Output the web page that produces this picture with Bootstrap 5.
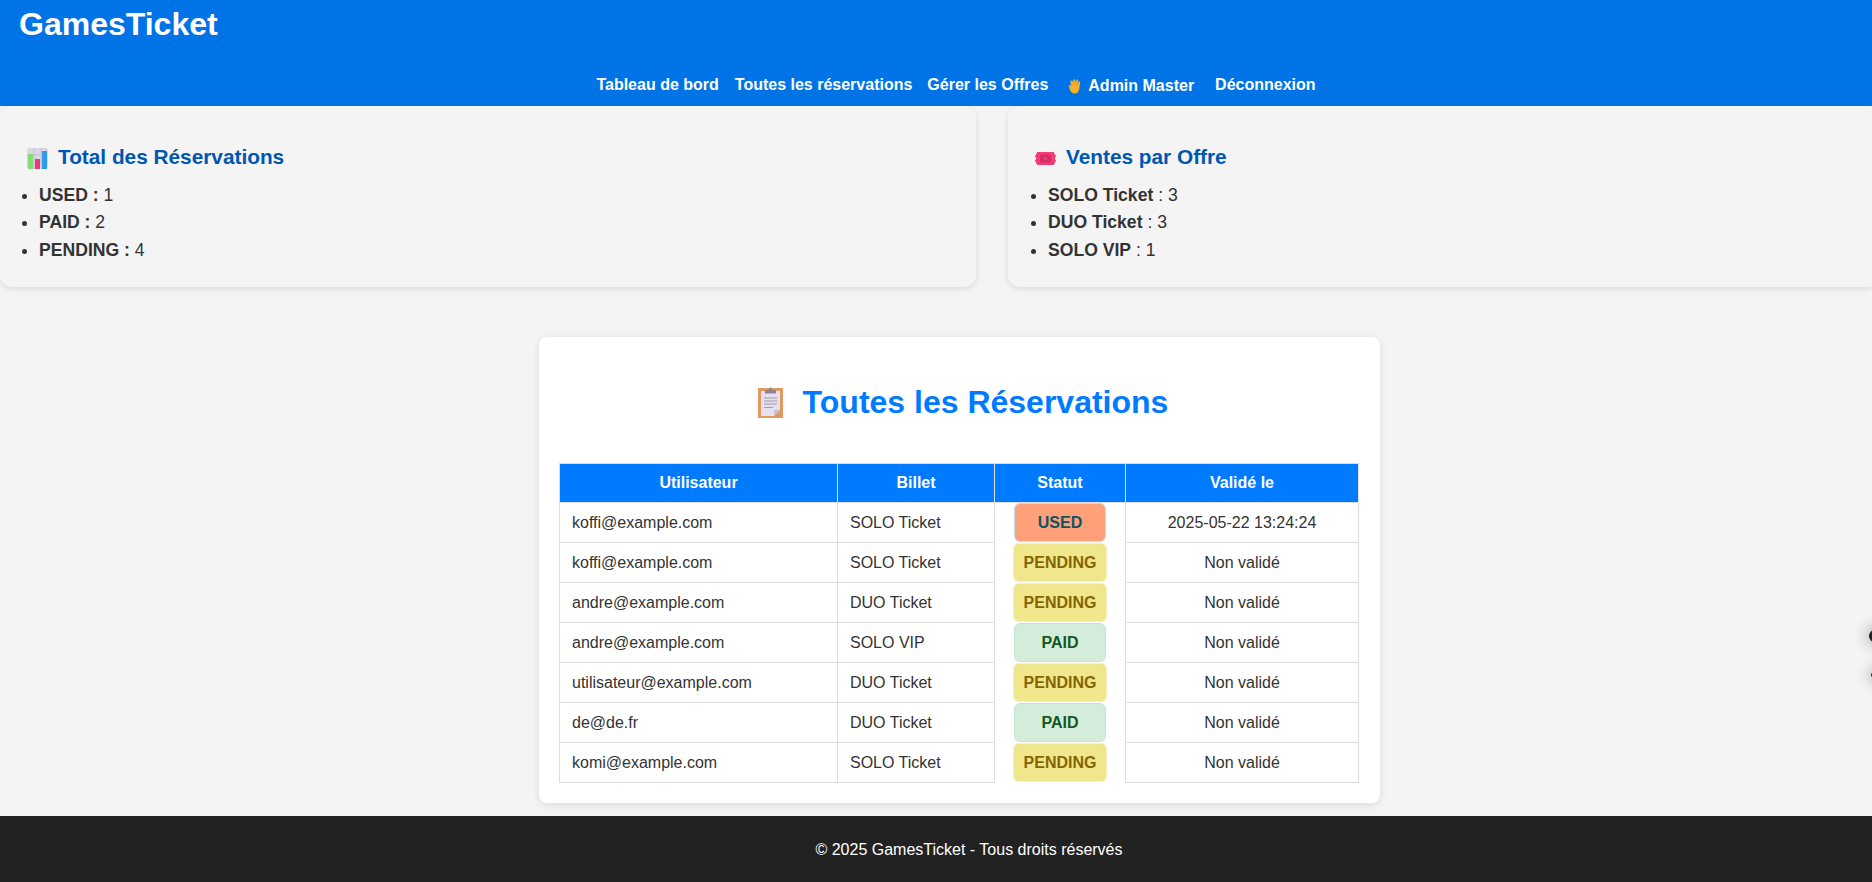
<!DOCTYPE html>
<html lang="fr">
<head>
  <meta charset="UTF-8">
  <meta name="viewport" content="width=device-width, initial-scale=1.0">
  <title>GamesTicket - Toutes les réservations</title>
  <link rel="stylesheet" href="https://cdn.jsdelivr.net/npm/bootstrap@5.3.0/dist/css/bootstrap.min.css">
  <style>
    html, body { height: 100%; }
    body { font-family: "Liberation Sans", Arial, sans-serif; background: #f4f4f4; color: #333; font-size: 16px; line-height: 1.7; overflow: hidden; }

    .site-head { background: #0073e6; height: 106px; padding: 6px 19px 0; }
    .site-logo { font-size: 32px; font-weight: 700; line-height: 37px; color: #fff; margin: 0; }
    .site-nav { padding-left: 40px; margin: 33px 0 0; gap: 16px; line-height: 18px; }
    .site-nav a { color: #fff; font-weight: 700; text-decoration: none; }
    .nav-offers { margin-left: -1px; margin-right: 1px; }
    .nav-user { color: #fff; font-weight: 700; margin-left: 3px; margin-right: 5px; position: relative; top: 1px; }
    .nav-user svg { width: 15px; height: 15px; vertical-align: -3px; margin-right: 5px; }

    .stats-band { gap: 32px; height: 181px; }
    .stat-box { background: #f4f4f4; border-radius: 12px; box-shadow: 0 2px 6px rgba(0,0,0,.1); padding: 37px 24px 0; }
    .stat-left { flex: 0 0 976px; }
    .stat-right { flex: 1 1 0; border-radius: 12px 0 0 12px; padding-left: 25px; }
    .stat-title { font-size: 20.8px; font-weight: 700; color: #0056b3; line-height: 28px; margin: 0 0 11px 3px; }
    .stat-right .stat-title { margin-left: 2px; }
    .stat-title svg { margin-right: 10px; }
    .stat-box ul { margin: 0; padding-left: 15px; }
    .stat-box li { font-size: 17.6px; line-height: 27.3px; }

    .resa-box { width: 841px; margin: 50px 0 0 539px; height: 466px; background: #fff; border-radius: 8px; box-shadow: 0 2px 8px rgba(0,0,0,.1); padding: 0 20px; }
    .resa-title { font-size: 32px; font-weight: 700; color: #007bff; line-height: 38px; margin: 0; padding: 46px 0 0 7px; height: 126px; }
    .resa-title svg { margin-right: 20px; vertical-align: -5px; }

    .resa-table { table-layout: fixed; width: 800px; margin: 0; border-collapse: collapse; color: #333; }
    .resa-table th, .resa-table td { border: 1px solid #ddd; height: 40px; padding: 0 12px; vertical-align: middle; line-height: 20px; background: #fff; color: #333; }
    .resa-table th { background: #007bff; color: #fff; text-align: center; font-weight: 700; height: 39px; }
    .col-user { width: 278px; }
    .col-ticket { width: 157px; }
    .col-status { width: 131px; }
    .resa-table .status-cell { border-top: 0; border-bottom: 0; padding: 0; text-align: center; }
    .resa-table td.when-cell { text-align: center; }

    .status-pill { display: inline-block; box-sizing: border-box; min-width: 92px; height: 39px; padding: 0 10px; line-height: 37px; border: 1px solid; border-radius: 6px; font-weight: 700; vertical-align: middle; }
    .st-used { background: #ffa07a; color: #0c5460; border-color: #bee5eb; }
    .st-pending { background: #f0e68c; color: #856404; border-color: #ffeeba; }
    .st-paid { background: #d4edda; color: #155724; border-color: #c3e6cb; }

    .site-foot { height: 66px; margin-top: 13px; padding-left: 66px; background: #222; color: #fff; line-height: 68px; text-align: center; }
    .edge-strip { position: fixed; left: 1840px; top: 600px; width: 32px; height: 110px; overflow: hidden; }
    .edge-dot { position: absolute; border-radius: 50%; background: #222; box-shadow: 0 0 14px 4px rgba(0,0,0,.22); }
    .edge-dot-a { left: 29px; top: 25px; width: 44px; height: 22px; }
    .edge-dot-b { left: 31px; top: 68px; width: 44px; height: 14px; }
  </style>
</head>
<body>
  <header class="site-head">
    <h1 class="site-logo">GamesTicket</h1>
    <ul class="site-nav list-unstyled d-flex justify-content-center align-items-center">
      <li><a href="#">Tableau de bord</a></li>
      <li><a href="#">Toutes les réservations</a></li>
      <li class="nav-offers"><a href="#">Gérer les Offres</a></li>
      <li class="nav-user">
        <svg viewBox="0 0 14 15" aria-hidden="true"><path fill="#f7b02c" d="M2.600 1.700c.5-.4 1.100-.2 1.500.3L5 3.400 4.800 1.500c0-.7.4-1.200 1-1.300.6 0 1 .4 1.100 1l.5 2.200.5-2c.2-.6.7-.9 1.200-.8.6.2.8.7.7 1.300l-.6 2.500.9-1.400c.3-.5.9-.7 1.300-.4.5.3.6.9.3 1.400L11 7.700c-.2 1.100-.2 2.300-.6 3.600C9.700 13.600 7.600 15 5.500 14.500 3.400 14 1.900 12.300 1.300 10.400L.3 7.200c-.2-.6.1-1.100.6-1.300.5-.1 1 .1 1.200.6l.8 1.400L1.900 3.300c-.2-.6 0-1.200.7-1.600z"/><path fill="none" stroke="#d98a14" stroke-width=".6" d="M5 3.400l1 3M7.400 3.400l.2 3M9.500 3.600l-.8 3"/></svg>Admin Master
      </li>
      <li><a href="#">Déconnexion</a></li>
    </ul>
  </header>

  <section class="stats-band d-flex">
    <div class="stat-box stat-left">
      <h3 class="stat-title">
        <svg width="21" height="21" viewBox="0 0 21 21" aria-hidden="true"><rect width="21" height="21" rx="2.500" fill="#dcd6e4"/><path stroke="#c4bdcf" stroke-width=".8" d="M7 0v21M14 0v21M0 7h21M0 14h21"/><rect x="1" y="6" width="5" height="15" fill="#84dc74"/><rect x="8" y="11" width="5" height="10" fill="#ee3a78"/><rect x="15" y="3" width="5" height="18" fill="#2f9ae8"/></svg>Total des Réservations
      </h3>
      <ul>
        <li><strong>USED :</strong> 1</li>
        <li><strong>PAID :</strong> 2</li>
        <li><strong>PENDING :</strong> 4</li>
      </ul>
    </div>
    <div class="stat-box stat-right">
      <h3 class="stat-title">
        <svg width="21" height="13" viewBox="0 0 21 13" aria-hidden="true"><path fill="#f23c78" d="M2 0h17v1.600h1v1.800h1v1.800h-1v2.600h1v1.800h-1v1.800h-1V13H2v-1.600H1V9.600H0V7.800h1V5.200H0V3.400h1V1.600h1z"/><rect x="5" y="2.500" width="11" height="8" fill="#d82a66"/><rect x="9" y="5" width="3" height="3" fill="#f23c78"/></svg>Ventes par Offre
      </h3>
      <ul>
        <li><strong>SOLO Ticket</strong> : 3</li>
        <li><strong>DUO Ticket</strong> : 3</li>
        <li><strong>SOLO VIP</strong> : 1</li>
      </ul>
    </div>
  </section>

  <main class="resa-box">
    <h2 class="resa-title text-center">
      <svg width="25" height="31" viewBox="0 0 25 31" aria-hidden="true"><rect y="1" width="25" height="30" fill="#e09a60"/><path fill="#e6dff0" d="M3 4h19v19l-6 6H3z"/><path fill="#c9c0d6" d="M16 29l6-6h-6z"/><path fill="#8b8590" d="M7 3h3.500l2-3 2 3H18v3.500H7z"/><path stroke="#a29cac" stroke-width="1.200" d="M6 11h13M6 14h13M6 17h13M6 20.500h9"/></svg>Toutes les Réservations
    </h2>
    <table class="table resa-table">
      <thead>
        <tr>
          <th class="col-user">Utilisateur</th>
          <th class="col-ticket">Billet</th>
          <th class="col-status">Statut</th>
          <th>Validé le</th>
        </tr>
      </thead>
      <tbody>
        <tr><td>koffi@example.com</td><td>SOLO Ticket</td><td class="status-cell"><span class="status-pill st-used">USED</span></td><td class="when-cell">2025-05-22 13:24:24</td></tr>
        <tr><td>koffi@example.com</td><td>SOLO Ticket</td><td class="status-cell"><span class="status-pill st-pending">PENDING</span></td><td class="when-cell">Non validé</td></tr>
        <tr><td>andre@example.com</td><td>DUO Ticket</td><td class="status-cell"><span class="status-pill st-pending">PENDING</span></td><td class="when-cell">Non validé</td></tr>
        <tr><td>andre@example.com</td><td>SOLO VIP</td><td class="status-cell"><span class="status-pill st-paid">PAID</span></td><td class="when-cell">Non validé</td></tr>
        <tr><td>utilisateur@example.com</td><td>DUO Ticket</td><td class="status-cell"><span class="status-pill st-pending">PENDING</span></td><td class="when-cell">Non validé</td></tr>
        <tr><td>de@de.fr</td><td>DUO Ticket</td><td class="status-cell"><span class="status-pill st-paid">PAID</span></td><td class="when-cell">Non validé</td></tr>
        <tr><td>komi@example.com</td><td>SOLO Ticket</td><td class="status-cell"><span class="status-pill st-pending">PENDING</span></td><td class="when-cell">Non validé</td></tr>
      </tbody>
    </table>
  </main>

  <footer class="site-foot">© 2025 GamesTicket - Tous droits réservés</footer>
  <div class="edge-strip">
    <div class="edge-dot edge-dot-a"></div>
    <div class="edge-dot edge-dot-b"></div>
  </div>
</body>
</html>
